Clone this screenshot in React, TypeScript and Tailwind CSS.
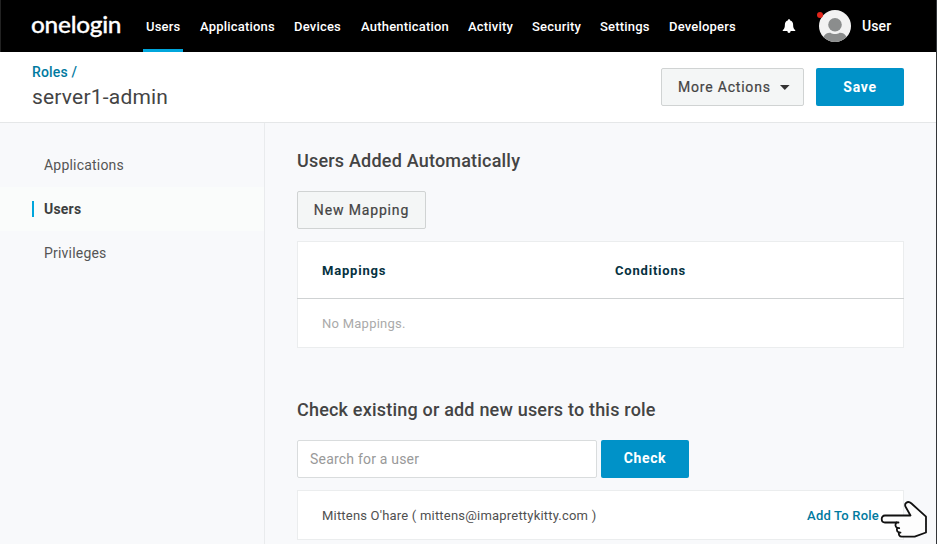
const navItems = [
  { label: 'Users', width: 'w-[34px]' },
  { label: 'Applications', width: 'w-[74px]' },
  { label: 'Devices', width: 'w-[47px]' },
  { label: 'Authentication', width: 'w-[87px]' },
  { label: 'Activity', width: 'w-[44px]' },
  { label: 'Security', width: 'w-[48px]' },
  { label: 'Settings', width: 'w-[49px]' },
  { label: 'Developers', width: 'w-[67px]' },
];

function BellIcon() {
  return (
    <svg className="block h-[15px] w-[14px]" viewBox="0 0 14 15" fill="#fff">
      <path d="M7 .2c.7 0 1.1.5 1.2 1.2 1.9.5 2.900 2 2.900 4.100 0 3.200.6 4.400 2.100 5.500.3.3.2.9-.3.9H1.100c-.5 0-.6-.6-.3-.9 1.500-1.100 2.100-2.300 2.100-5.500 0-2.100 1-3.600 2.900-4.100C5.900.7 6.300.2 7 .2Z" />
      <path d="M5.400 12h3.200c0 1.300-.7 2-1.600 2s-1.600-.7-1.600-2Z" />
    </svg>
  );
}

function Avatar() {
  return (
    <svg className="block h-8 w-8" viewBox="0 0 32 32">
      <defs>
        <clipPath id="avatar-circle">
          <circle cx="16" cy="16" r="16" />
        </clipPath>
      </defs>
      <circle cx="16" cy="16" r="16" fill="#f2f2f2" />
      <g clipPath="url(#avatar-circle)" fill="#8b8d8d">
        <circle cx="16" cy="14.700" r="6.800" />
        <path d="M4.500 27c1-3 4-4.500 7-4.300 1.500 1 2.800 1.300 4.500 1.300s3-.3 4.500-1.300c3-.2 6 1.300 7 4.300v6h-23Z" />
      </g>
    </svg>
  );
}

function PointingHand() {
  return (
    <svg
      className="absolute left-[880px] top-[499px] h-[40px] w-[48px]"
      viewBox="0 0 48 40"
      fill="#fdfdfd"
      stroke="#111"
      strokeWidth="1.800"
      strokeLinejoin="round"
      strokeLinecap="round"
    >
      <path d="M30.500 16.500H5c-4.400 0-4.400 7 0 7h11.500c-1.700 2-1.200 4.400.8 5.300-.8 2 0 4 1.600 4.700-.4 2.400.7 4.200 2.800 4.200h13l11.300-4.200V17.700L31.500 4.500c-4-3.500-8 .2-5.500 4L30.500 16.500Z" />
      <path d="M16.500 23.500h2M17.300 28.800l1.900.4M18.900 33.500l1.600.2" fill="none" />
    </svg>
  );
}

function Header() {
  return (
    <header className="flex h-[52px] items-center border-l border-[#222] bg-black text-[13px] font-medium text-white">
      <div className="ml-[30px] -mt-[5px] w-[115px] origin-left scale-x-[1.06] whitespace-nowrap font-['Lato',sans-serif] text-[23px] leading-[36px] tracking-[-0.25px] [-webkit-text-stroke:0.3px_#fff]">
        onelogin
      </div>
      <nav className="flex h-full gap-5">
        {navItems.map(({ label, width }, i) => (
          <a key={label} className={`relative flex h-full items-center whitespace-nowrap pt-[2px] tracking-[0.2px] ${width}`}>
            {label}
            {i === 0 && <span className="absolute -left-[3px] bottom-0 h-[3px] w-10 bg-[#00a6dc]" />}
          </a>
        ))}
      </nav>
      <div className="ml-[46px]">
        <BellIcon />
      </div>
      <div className="relative ml-[23px]">
        <Avatar />
        <span className="absolute -left-[2px] top-[2px] h-[6px] w-[6px] rounded-full bg-[#e1251b]" />
      </div>
      <span className="ml-[11px] pt-px text-[14px] tracking-[0.1px]">User</span>
    </header>
  );
}

export default function App() {
  return (
    <div className="relative flex h-[544px] w-[937px] flex-col overflow-hidden bg-[#f8f9fb] font-['Roboto',sans-serif] text-[#444]">
      <Header />

      <section className="flex h-[71px] items-center justify-between border-b border-[#e5e7e8] bg-white pl-8 pr-[33px]">
        <div>
          <div className="text-[14px] font-medium leading-5 tracking-[0.15px] text-[#007a9f]">Roles /</div>
          <h1 className="text-[21px] leading-[30px] tracking-[0.2px] text-[#444]">server1-admin</h1>
        </div>
        <div className="flex gap-3 text-[14px] tracking-[0.8px]">
          <button className="flex h-[38px] w-[143px] items-center rounded-[2px] border border-[#d0d3d3] bg-[#f4f6f6] pl-4">
            <span className="w-[102px] whitespace-nowrap text-left [-webkit-text-stroke:0.2px_#444]">More Actions</span>
            <svg className="h-[5px] w-[10px]" viewBox="0 0 10 5" fill="#333">
              <path d="M0 0h9.600L4.800 5Z" />
            </svg>
          </button>
          <button className="h-[38px] w-[88px] rounded-[2px] bg-[#0092c8] font-bold tracking-[0.7px] text-white">Save</button>
        </div>
      </section>

      <div className="flex flex-1">
        <aside className="w-[265px] border-r border-[#e9ebed] pt-5 text-[14px] tracking-[0.2px] text-[#555]">
          <a className="flex h-11 items-center pl-11">Applications</a>
          <a className="flex h-11 items-center bg-[#fafcfb] pl-8 font-bold text-[#3c3f3f]">
            <span className="mr-[10px] h-4 w-[2px] bg-[#00a6dc]" />
            Users
          </a>
          <a className="flex h-11 items-center pl-11">Privileges</a>
        </aside>

        <main className="w-[639px] pl-8 pt-[26px]">
          <h2 className="text-[18px] font-medium leading-6 tracking-[0.2px]">Users Added Automatically</h2>
          <button className="mt-[18px] block h-[38px] w-[129px] rounded-[2px] border border-[#d0d3d3] bg-[#f4f6f6] text-[14px] tracking-[0.85px] [-webkit-text-stroke:0.2px_#444]">
            New Mapping
          </button>

          <div className="mt-3 h-[107px] border border-[#ebedee] bg-white text-[13px]">
            <div className="-mx-px flex h-[57px] items-center border-b border-[#cfd2d3] pl-[25px] pt-[2px] font-bold tracking-[0.8px] text-[#06323f]">
              <span className="w-[293px]">Mappings</span>
              <span>Conditions</span>
            </div>
            <div className="flex h-12 items-center pl-6 pt-[2px] tracking-[0.25px] text-[#aaa]">No Mappings.</div>
          </div>

          <h2 className="mt-[50px] text-[18px] font-medium leading-6 tracking-[0.2px]">
            Check existing or add new users to this role
          </h2>
          <div className="mt-[18px] flex gap-1 text-[14px]">
            <div className="flex h-[38px] w-[300px] items-center rounded-[2px] border border-[#d9dcdd] bg-white pl-3 tracking-[0.2px] text-[#999]">
              Search for a user
            </div>
            <button className="h-[38px] w-[88px] rounded-[2px] bg-[#0092c8] pb-[2px] font-bold tracking-[0.6px] text-white">
              Check
            </button>
          </div>
          <div className="mt-3 flex h-[50px] items-center justify-between border border-[#ebedee] bg-white pl-6 pr-6 pt-[2px] text-[13px] tracking-[0.2px] text-[#505050]">
            <span>Mittens O'hare ( mittens@imaprettykitty.com )</span>
            <span className="font-medium text-[#007a9f]">Add To Role</span>
          </div>
        </main>
      </div>

      <PointingHand />
      <div className="absolute right-0 top-0 h-full w-px bg-[#333639]" />
    </div>
  );
}
